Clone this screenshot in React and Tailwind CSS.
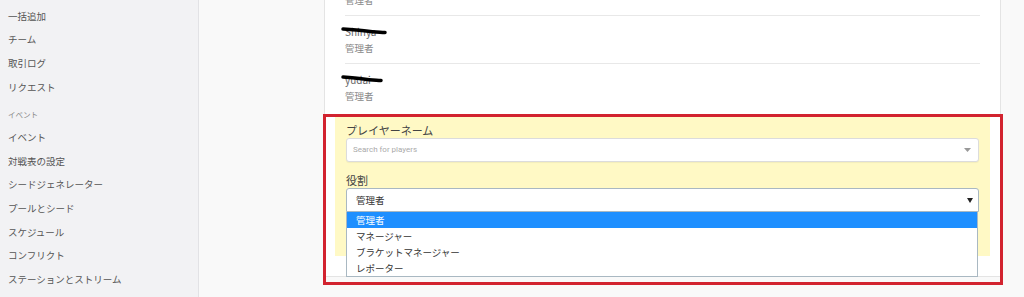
const font = { fontFamily: '"Noto Sans CJK JP", "Noto Sans", sans-serif' };

const navTop = ["一括追加", "チーム", "取引ログ", "リクエスト"];
const navEvent = ["イベント", "対戦表の設定", "シードジェネレーター", "プールとシード", "スケジュール", "コンフリクト", "ステーションとストリーム"];
const roles = ["管理者", "マネージャー", "ブラケットマネージャー", "レポーター"];

function Scribble({ w }) {
    return (
        <svg className="absolute left-[-4px] top-[0px] pointer-events-none" width={w + 10} height="10" viewBox={`0 0 ${w + 10} 10`}>
            <path d={`M2 3 C ${w * 0.3} 3.5, ${w * 0.5} 4, ${w * 0.7} 5 S ${w} 6, ${w + 8} 6.5`} stroke="#000" strokeWidth="3.5" fill="none" strokeLinecap="round" />
        </svg>
    );
}

function Member({ name, w, last }) {
    return (
        <div className={`h-[48px] flex flex-col pt-[10px] ${last ? "" : "border-b border-[#e8e8e8]"}`}>
            <span className="relative w-fit h-[12px] text-[10px] leading-[12px] text-[#666]">
                {name}
                {w > 0 && <Scribble w={w} />}
            </span>
            <span className="mt-[4px] text-[9.5px] leading-[12px] text-[#888]">管理者</span>
        </div>
    );
}

export default function App() {
    return (
        <div className="flex h-[297px] w-[1024px] overflow-hidden bg-[#f9f9f9]" style={font}>
            {/* Sidebar */}
            <aside className="w-[199px] shrink-0 bg-[#f2f2f4] border-r border-[#e2e2e5] pl-[8px] pt-[4px]">
                {navTop.map(t => (
                    <div key={t} className="h-[23.7px] flex items-center text-[9.5px] text-[#555]">{t}</div>
                ))}
                <div className="h-[26.5px] flex items-center pt-[6px] text-[7.5px] text-[#888]">イベント</div>
                {navEvent.map(t => (
                    <div key={t} className="h-[23.7px] flex items-center text-[9.5px] text-[#555]">{t}</div>
                ))}
            </aside>

            {/* Main */}
            <main className="flex-1 pl-[125px]">
                <div className="relative flex flex-col w-[677px] h-[277px] bg-white border-x border-b border-[#e4e4e4]">
                    <div className="px-[20px] -mt-[32px]">
                        <Member name="admin" w={0} />
                        <Member name="Shinya" w={36} />
                        <Member name="yudai" w={32} last />
                    </div>

                    {/* Form */}
                    <div className="relative mx-[10px] mt-[5px] h-[139px] bg-[#fff9c5] px-[11px] pt-[6px]">
                        <div className="text-[11px] leading-[15px] text-[#444]">プレイヤーネーム</div>
                        <div className="h-[24px] flex items-center justify-between bg-white border border-[#dcdcdc] rounded-[3px] pl-[6px] pr-[7px] shadow-[0_1px_1px_rgba(0,0,0,0.05)]">
                            <span className="text-[8px] text-[#aaa]" style={{ fontFamily: 'Roboto, "Noto Sans", sans-serif' }}>Search for players</span>
                            <svg width="7" height="4" viewBox="0 0 7 4"><path d="M0 0 L7 0 L3.5 4 Z" fill="#999" /></svg>
                        </div>
                        <div className="mt-[11px] text-[11px] leading-[15px] text-[#444]">役割</div>
                        <div className="relative">
                            <div className="h-[24px] flex items-center justify-between bg-white border border-[#a9b8c2] rounded-t-[3px] pl-[9px] pr-[5px]">
                                <span className="text-[9.5px] text-[#333]">管理者</span>
                                <svg width="6" height="5" viewBox="0 0 6 5"><path d="M0 0 L6 0 L3 5 Z" fill="#222" /></svg>
                            </div>
                            {/* Open list */}
                            <ul className="absolute left-0 right-[1px] top-[24px] bg-white border border-t-0 border-[#a9b8c2] z-10">
                                {roles.map((r, i) => (
                                    <li key={r} className={`h-[16px] flex items-center pl-[9px] text-[9.5px] ${i === 0 ? "bg-[#1e8fff] text-white" : "text-[#333]"}`}>{r}</li>
                                ))}
                            </ul>
                        </div>
                    </div>

                    {/* Annotation box */}
                    <div className="absolute left-[-2px] right-[-3px] top-[114px] h-[171px] border-[3px] border-[#d2232f] pointer-events-none z-20" />
                </div>
            </main>
        </div>
    );
}
